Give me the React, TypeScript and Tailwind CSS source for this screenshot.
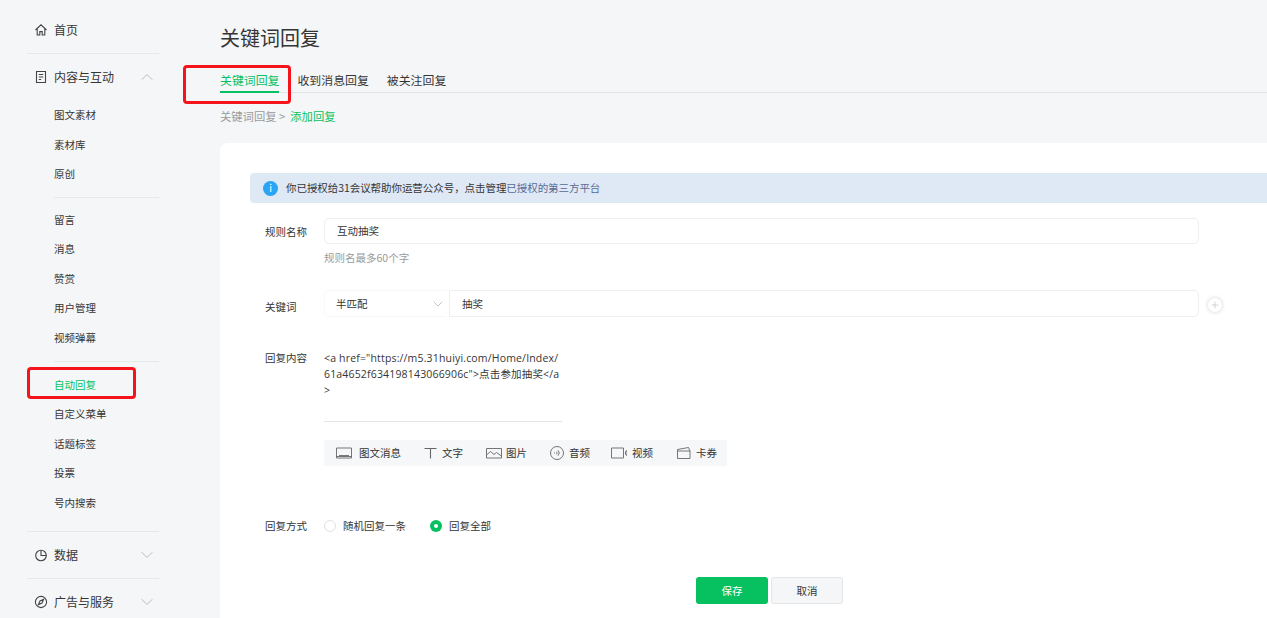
import { ChevronDown, ChevronUp, Plus } from "lucide-react";

const font = { fontFamily: '"Noto Sans CJK SC", "Liberation Sans", sans-serif' };

const groupA = ["图文素材", "素材库", "原创"];
const groupB = ["留言", "消息", "赞赏", "用户管理", "视频弹幕"];
const groupC = ["自动回复", "自定义菜单", "话题标签", "投票", "号内搜索"];

function SubItem({ label }: { label: string }) {
  const active = label === "自动回复";
  return (
    <div className={`flex h-[29.6px] items-center pl-[54px] text-[10.5px] ${active ? "text-[#07c160]" : "text-[#353535]"}`}>
      {label}
    </div>
  );
}

function Divider({ sub }: { sub?: boolean }) {
  return <div className={`h-px bg-[#e7e8ea] ${sub ? "ml-[54px] w-[105px]" : "ml-[27px] w-[132px]"}`} />;
}

function NavHead({ label, icon, arrow }: { label: string; icon: React.ReactNode; arrow?: "up" | "down" }) {
  return (
    <div className="flex h-[24px] items-center text-[12px] text-[#353535]">
      <div className="flex w-[54px] justify-end pr-[6px]">{icon}</div>
      <span>{label}</span>
      {arrow === "up" && <ChevronUp className="ml-auto mr-[3px] h-[20px] w-[20px] text-[#b5b5b5]" strokeWidth={1.1} />}
      {arrow === "down" && <ChevronDown className="ml-auto mr-[3px] h-[20px] w-[20px] text-[#b5b5b5]" strokeWidth={1.1} />}
    </div>
  );
}

function Sidebar() {
  return (
    <aside className="relative w-[220px] shrink-0">
      <div className="w-[160px] pt-[18px]">
        <NavHead
          label="首页"
          icon={
            <svg viewBox="0 0 14 14" className="h-[14px] w-[14px]" fill="none" stroke="#444" strokeWidth="1.1">
              <path d="M1.5 7 7 1.8 12.5 7M3.2 6v6h2.6V8.6h2.4V12h2.6V6" />
            </svg>
          }
        />
        <div className="mt-[11px]"><Divider /></div>
        <div className="mt-[11px]">
          <NavHead
            label="内容与互动"
            arrow="up"
            icon={
              <svg viewBox="0 0 14 14" className="h-[14px] w-[14px]" fill="none" stroke="#444" strokeWidth="1.1">
                <path d="M2.5 1.5h9v11h-9zM4.8 4.500h4.400M4.800 7h4.400M4.800 9.500h2.400" />
              </svg>
            }
          />
        </div>
        <div className="mt-[11px]">{groupA.map((l) => <SubItem key={l} label={l} />)}</div>
        <div className="mt-[8px]"><Divider sub /></div>
        <div className="mt-[7px]">{groupB.map((l) => <SubItem key={l} label={l} />)}</div>
        <div className="mt-[8px]"><Divider sub /></div>
        <div className="mt-[8px]">{groupC.map((l) => <SubItem key={l} label={l} />)}</div>
        <div className="mt-[13px]"><Divider /></div>
        <div className="mt-[11px]">
          <NavHead
            label="数据"
            arrow="down"
            icon={
              <svg viewBox="0 0 14 14" className="h-[14px] w-[14px]" fill="none" stroke="#444" strokeWidth="1.1">
                <circle cx="7" cy="7.500" r="5.300" />
                <path d="M7 2.200v5.300h5.300" />
              </svg>
            }
          />
        </div>
        <div className="mt-[11px]"><Divider /></div>
        <div className="mt-[11px]">
          <NavHead
            label="广告与服务"
            arrow="down"
            icon={
              <svg viewBox="0 0 14 14" className="h-[14px] w-[14px]" fill="none" stroke="#444" strokeWidth="1.1">
                <circle cx="7" cy="7" r="5.600" />
                <path d="M9.600 4.400 8 8 4.400 9.600 6 6z" />
              </svg>
            }
          />
        </div>
      </div>
      <div className="absolute left-[27px] top-[367px] h-[32px] w-[109px] rounded-[4px] border-[3px] border-[#f5141b]" />
    </aside>
  );
}

function ToolIcon({ name }: { name: string }) {
  const cls = "h-[16px] w-[16px]";
  const p = { fill: "none", stroke: "#666", strokeWidth: 0.9 };
  if (name === "图文消息")
    return (
      <svg viewBox="0 0 16 16" className={cls} {...p}>
        <path d="M.5 3h15v10H.5zM3 10.500h10M.5 11.500h15" />
      </svg>
    );
  if (name === "文字")
    return (
      <svg viewBox="0 0 16 16" className={cls} {...p}>
        <path d="M.5 3.500h12M6.500 3.500v10" strokeWidth="1.1" />
      </svg>
    );
  if (name === "图片")
    return (
      <svg viewBox="0 0 16 16" className={cls} {...p}>
        <path d="M.5 3.500h15v9.500H.5zM.5 10l4-3.500 3.500 3 2.500-2 5 3.500" />
      </svg>
    );
  if (name === "音频")
    return (
      <svg viewBox="0 0 16 16" className={cls} {...p}>
        <circle cx="7" cy="8" r="6.500" />
        <path d="M8 5.300a3.800 3.800 0 0 1 0 5.400M6.500 6.700a1.800 1.800 0 0 1 0 2.600M4.500 7.500v1" />
      </svg>
    );
  if (name === "视频")
    return (
      <svg viewBox="0 0 16 16" className={cls} {...p}>
        <path d="M.5 3h12v10H.5zM16 5.500l-1.500 1v3l1.500 1z" />
      </svg>
    );
  return (
    <svg viewBox="0 0 16 16" className={cls} {...p}>
      <path d="M.5 6h12.500v7.500H.5zM.5 6V4.500l11-2 1.500 3.500" />
    </svg>
  );
}

const tools = [
  { name: "图文消息", cls: "w-[88px] gap-[7px]" },
  { name: "文字", cls: "w-[62px] gap-[2px]" },
  { name: "图片", cls: "w-[64px] gap-[4px]" },
  { name: "音频", cls: "w-[61px] gap-[3px]" },
  { name: "视频", cls: "w-[66px] gap-[5px]" },
  { name: "卡券", cls: "w-[40px] gap-[3px]" },
];

function Label({ children }: { children: React.ReactNode }) {
  return <div className="w-[74px] shrink-0 pl-[15px] text-[10.5px] leading-[16px] text-[#353535]">{children}</div>;
}

function FormCard() {
  return (
    <div className="rounded-tl-[8px] bg-white pl-[30px] pt-[30px]">
      <div className="flex h-[30px] items-center rounded-l-[4px] bg-[#dfe8f5] pl-[13px] text-[10.5px] tracking-[-0.06px] text-[#353535]">
        <span className="mr-[8px] flex h-[15px] w-[15px] items-center justify-center rounded-full bg-[#2aa4f4] text-[10px] leading-none text-white">i</span>
        你已授权给31会议帮助你运营公众号，点击管理
        <span className="text-[#576b95]">已授权的第三方平台</span>
      </div>

      <div className="mt-[15px] flex">
        <div className="pt-[6px]"><Label>规则名称</Label></div>
        <div>
          <div className="flex h-[26px] w-[875px] items-center rounded-[5px] border border-[#efefef] pl-[12px] text-[10.5px] text-[#353535]">
            互动抽奖
          </div>
          <div className="mt-[6px] text-[10.5px] leading-[16px] text-[#9a9a9a]">规则名最多60个字</div>
        </div>
      </div>

      <div className="mt-[24px] flex">
        <div className="pt-[9px]"><Label>关键词</Label></div>
        <div className="flex h-[27px] w-[875px]">
          <div className="flex w-[122px] items-center rounded-l-[5px] border border-r-0 border-[#f8f8f8] pl-[11px] text-[10.5px] text-[#353535]">
            半匹配
            <ChevronDown className="ml-auto h-[16px] w-[16px] text-[#b5b5b5]" strokeWidth={1.2} />
          </div>
          <div className="ml-[3px] flex flex-1 items-center rounded-r-[5px] border border-[#efefef] pl-[12px] text-[10.5px] text-[#353535]">
            抽奖
          </div>
        </div>
        <div className="ml-[9px] mt-[8px] flex h-[14px] w-[14px] items-center justify-center rounded-full bg-white shadow-[0_0_4px_rgba(0,0,0,0.2)]">
          <Plus className="h-[10px] w-[10px] text-[#aaa]" strokeWidth={1.2} />
        </div>
      </div>

      <div className="mt-[33px] flex">
        <Label>回复内容</Label>
        <div>
          <div className="h-[72px] w-[238px] border-b border-[#e5e5e5] font-['Open_Sans','Noto_Sans_CJK_SC',sans-serif] text-[10.5px] leading-[16px] tracking-[0.17px] text-[#353535]">
            <div className="whitespace-nowrap">{'<a href="https://m5.31huiyi.com/Home/Index/'}</div>
            <div className="whitespace-nowrap">{'61a4652f634198143066906c">点击参加抽奖</a'}</div>
            <div>{">"}</div>
          </div>
          <div className="mt-[18px] flex h-[26px] w-[403px] items-center bg-[#f6f7f8] pl-[12px] text-[10.5px] text-[#353535]">
            {tools.map((t) => (
              <div key={t.name} className={`flex shrink-0 items-center ${t.cls}`}>
                <ToolIcon name={t.name} />
                <span>{t.name}</span>
              </div>
            ))}
          </div>
        </div>
      </div>

      <div className="mt-[52px] flex items-center">
        <Label>回复方式</Label>
        <div className="flex items-center text-[10.5px] text-[#353535]">
          <span className="h-[12px] w-[12px] rounded-full border border-[#e2e2e2]" />
          <span className="ml-[7px]">随机回复一条</span>
          <span className="ml-[24px] flex h-[12px] w-[12px] items-center justify-center rounded-full bg-[#07c160]">
            <span className="h-[4px] w-[4px] rounded-full bg-white" />
          </span>
          <span className="ml-[7px]">回复全部</span>
        </div>
      </div>

      <div className="mt-[43px] flex gap-[3px] pb-[20px] pl-[446px]">
        <div className="flex h-[27px] w-[72px] items-center justify-center rounded-[3px] bg-[#07c160] text-[10.5px] text-white">保存</div>
        <div className="flex h-[27px] w-[72px] items-center justify-center rounded-[3px] border border-[#e4e5e7] bg-[#f5f6f7] text-[10.5px] text-[#353535]">取消</div>
      </div>
    </div>
  );
}

export default function App() {
  return (
    <div className="flex h-[618px] w-[1267px] overflow-hidden bg-[#f5f6f7]" style={font}>
      <Sidebar />
      <main className="relative min-w-0 flex-1">
        <h1 className="pt-[24px] text-[20px] font-normal leading-[28px] text-[#353535]">关键词回复</h1>
        <div className="mt-[6px] flex h-[35px] items-end gap-[18px] border-b border-[#e2e3e5] text-[11.9px] text-[#353535]">
          <div className="relative h-[23px] leading-[22px] text-[#07c160]">
            关键词回复
            <div className="absolute bottom-[-1px] left-0 h-[2px] w-full bg-[#07c160]" />
          </div>
          <div className="h-[23px] leading-[22px]">收到消息回复</div>
          <div className="h-[23px] leading-[22px]">被关注回复</div>
        </div>
        <div className="mt-[15px] h-[35px] text-[11.3px] leading-[16px] text-[#9a9a9a]">
          关键词回复 &gt;<span className="ml-[5px] text-[#07c160]">添加回复</span>
        </div>
        <FormCard />
        <div className="absolute left-[-37px] top-[65px] h-[39px] w-[108px] rounded-[4px] border-[3px] border-[#f5141b]" />
      </main>
    </div>
  );
}
